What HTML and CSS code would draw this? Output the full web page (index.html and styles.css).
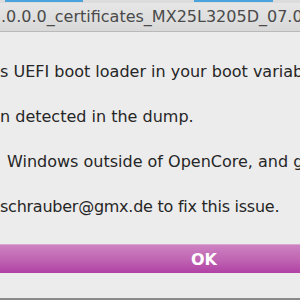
FILE: index.html
```html
<!DOCTYPE html>
<html>
<head>
<meta charset="utf-8">
<link rel="stylesheet" href="styles.css">
</head>
<body>
<div class="window">
  <div class="tabs">
    <span class="tab tab-a"></span>
    <span class="tab tab-b"></span>
  </div>
  <div class="titlebar"><span class="title">.0.0.0_certificates_MX25L3205D_07.0</span></div>
  <div class="content">
    <p class="line l1">s UEFI boot loader in your boot variab</p>
    <p class="line l2">n detected in the dump.</p>
    <p class="line l3">Windows outside of OpenCore, and g</p>
    <p class="line l4">schrauber@gmx.de to fix this issue.</p>
    <div class="button"><span class="ok">OK</span></div>
  </div>
  <div class="bottom"></div>
</div>
</body>
</html>
```
FILE: styles.css
```css
html, body {
  margin: 0;
  padding: 0;
  width: 300px;
  height: 300px;
  overflow: hidden;
  background: #ececec;
}
.window {
  width: 300px;
  height: 300px;
  display: flex;
  flex-direction: column;
  font-family: "DejaVu Sans", Verdana, sans-serif;
  overflow: hidden;
}
.tabs {
  height: 3px;
  background: #dcdcdc;
  display: flex;
}
.tab {
  display: block;
  height: 2px;
  background: #4ba3dd;
}
.tab-a { width: 78px; margin-left: 5px; }
.tab-b { width: 79px; margin-left: 111px; }
.titlebar {
  height: 28px;
  background: linear-gradient(#e6e6e6, #d8d8d8);
  border-bottom: 1px solid #b9b9b9;
  white-space: nowrap;
  overflow: hidden;
}
.title {
  display: block;
  font-size: 16px;
  line-height: 28px;
  color: #4a4a4a;
  margin-left: 1px;
}
.content {
  flex: 1;
  background: #ececec;
  display: flex;
  flex-direction: column;
}
.line {
  margin: 0;
  white-space: nowrap;
  overflow: hidden;
  font-size: 16px;
  line-height: 45px;
  color: #262626;
}
.l1 { margin-top: 17px; }
.l3 { padding-left: 7px; }
.l4 { letter-spacing: -0.25px; }
.button {
  margin-top: 15px;
  height: 28px;
  background: linear-gradient(#cd82c2, #c066b3 50%, #b142a4);
  border-top: 1px solid #d9a6d2;
  display: flex;
  align-items: center;
  justify-content: center;
}
.ok {
  color: #ffffff;
  font-size: 16px;
  font-weight: bold;
  margin-left: 108px;
}
.bottom {
  height: 2px;
  background: #8a8a8a;
}
```
